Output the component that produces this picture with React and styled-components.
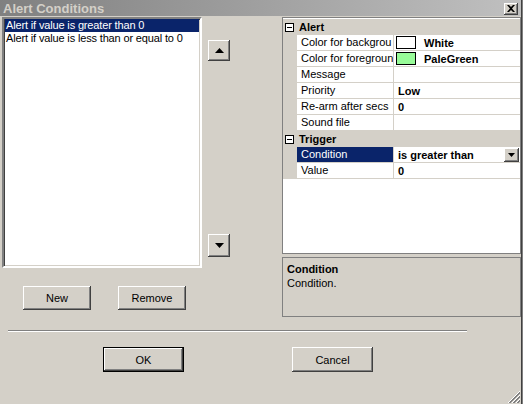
import React from "react";
import styled, { createGlobalStyle, css } from "styled-components";

const FACE = "#d4d0c8";
const NAVY = "#0a246a";

const Global = createGlobalStyle`
  html, body { margin: 0; padding: 0; background: ${FACE}; }
  body { font-family: "Liberation Sans", Arial, sans-serif; font-size: 11px; color: #000; }
  * { box-sizing: border-box; }
`;

const raised = css`
  background: ${FACE};
  box-shadow: inset -1px -1px #404040, inset 1px 1px #fff, inset -2px -2px #808080;
`;

const Window = styled.div`
  width: 523px;
  height: 404px;
  background: ${FACE};
  border-right: 1px solid #808080;
  box-shadow: inset -1px 0 #404040;
  position: relative;
  display: flex;
  flex-direction: column;
  overflow: hidden;
`;

const TitleBar = styled.div`
  height: 16px;
  margin-right: 1px;
  background: linear-gradient(to right, #808080, #c0c0c0);
  display: flex;
  align-items: center;
  justify-content: space-between;
  padding: 0 3px 0 3px;
`;

const Title = styled.span`
  font-weight: bold;
  font-size: 13px;
  color: ${FACE};
`;

const CloseButton = styled.div`
  ${raised};
  width: 14px;
  height: 12px;
  display: flex;
  align-items: center;
  justify-content: center;
  margin-top: 1px;
`;

const Body = styled.div`
  display: flex;
  padding: 1px 0 0 2px;
`;

const LeftCol = styled.div`
  width: 200px;
  display: flex;
  flex-direction: column;
`;

const ListBox = styled.div`
  height: 251px;
  background: #fff;
  border: 2px solid;
  border-color: #808080 #fff #fff #808080;
  box-shadow: inset 1px 1px #404040, inset -1px -1px ${FACE};
  padding: 0 1px 0 1px;
`;

const ListItem = styled.div`
  height: 13px;
  line-height: 13px;
  padding-left: 1px;
  white-space: nowrap;
  letter-spacing: -0.15px;
  background: ${(p) => (p.$selected ? NAVY : "transparent")};
  color: ${(p) => (p.$selected ? "#fff" : "#000")};
`;

const ButtonRow = styled.div`
  display: flex;
  gap: 27px;
  padding-left: 21px;
  margin-top: 18px;
`;

const Button = styled.button`
  ${raised};
  border: none;
  width: ${(p) => p.$w}px;
  height: ${(p) => p.$h}px;
  font-family: inherit;
  font-size: 11px;
  color: #000;
  padding: 0;
  display: flex;
  align-items: center;
  justify-content: center;
  ${(p) =>
    p.$default &&
    css`
      box-shadow: inset 0 0 0 1px #000, inset -2px -2px #404040, inset 2px 2px #fff,
        inset -3px -3px #808080;
    `}
`;

const MidCol = styled.div`
  width: 80px;
  display: flex;
  flex-direction: column;
  padding-left: 6px;
`;

const ArrowButton = styled(Button)`
  margin-top: ${(p) => p.$top}px;
`;

const RightCol = styled.div`
  width: 239px;
  display: flex;
  flex-direction: column;
  gap: 3px;
`;

const Grid = styled.div`
  height: 237px;
  border: 1px solid #808080;
  background: #fff;
  padding-top: 1px;
`;

const Row = styled.div`
  display: grid;
  grid-template-columns: 14px 96px 1px 1fr;
  height: 16px;
  border-bottom: 1px solid ${FACE};
`;

const Margin = styled.div`
  background: ${FACE};
`;

const CategoryRow = styled.div`
  display: flex;
  align-items: center;
  height: 16px;
  background: ${FACE};
`;

const ExpandBox = styled.div`
  width: 9px;
  height: 9px;
  border: 1px solid #000;
  background: #fff;
  margin: 0 3px 0 2px;
  display: flex;
  align-items: center;
  justify-content: center;
  &::after {
    content: "";
    width: 5px;
    height: 1px;
    background: #000;
  }
`;

const CategoryLabel = styled.span`
  font-weight: bold;
  margin-left: 2px;
`;

const Label = styled.div`
  padding-left: 4px;
  line-height: 15px;
  white-space: nowrap;
  overflow: hidden;
  background: ${(p) => (p.$selected ? NAVY : "#fff")};
  color: ${(p) => (p.$selected ? "#fff" : "#000")};
`;

const Divider = styled.div`
  background: ${FACE};
`;

const Value = styled.div`
  display: flex;
  align-items: center;
  padding-left: ${(p) => p.$pad ?? 4}px;
  font-weight: bold;
  white-space: nowrap;
  position: relative;
`;

const Swatch = styled.span`
  width: 20px;
  height: 13px;
  border: 1px solid #000;
  background: ${(p) => p.$color};
  margin-right: 8px;
`;

const DropButton = styled.div`
  ${raised};
  position: absolute;
  right: 1px;
  top: 1px;
  width: 15px;
  height: 14px;
  display: flex;
  align-items: center;
  justify-content: center;
`;

const Description = styled.div`
  height: 60px;
  border: 1px solid #808080;
  padding: 4px 4px;
  line-height: 14px;
`;

const DescTitle = styled.div`
  font-weight: bold;
`;

const Separator = styled.div`
  margin: 13px 0 0 8px;
  width: 459px;
  height: 2px;
  border-top: 1px solid #808080;
  border-bottom: 1px solid #fff;
`;

const DialogButtons = styled.div`
  display: flex;
  gap: 108px;
  padding-left: 103px;
  margin-top: 15px;
`;

const Grip = styled.div`
  position: absolute;
  right: 2px;
  bottom: 1px;
  display: flex;
`;

const Triangle = ({ down, w = 7, h = 4 }) => (
  <svg width={w} height={h} viewBox={`0 0 ${w} ${h}`}>
    <path d={down ? `M0 0H${w}L${w / 2} ${h}Z` : `M${w / 2} 0L${w} ${h}H0Z`} fill="#000" />
  </svg>
);

const CloseGlyph = () => (
  <svg width="8" height="7" viewBox="0 0 8 7">
    <path d="M0 0h2l2 2 2-2h2L5 3.5 8 7H6L4 5 2 7H0l3-3.5Z" fill="#000" />
  </svg>
);

const GripGlyph = () => (
  <svg width="12" height="12" viewBox="0 0 12 12">
    {[0, 4, 8].map((o) => (
      <g key={o}>
        <line x1={12} y1={o} x2={o} y2={12} stroke="#fff" strokeWidth="1" />
        <line x1={12} y1={o + 1} x2={o + 1} y2={12} stroke="#808080" strokeWidth="1" />
        <line x1={12} y1={o + 2} x2={o + 2} y2={12} stroke="#808080" strokeWidth="1" />
      </g>
    ))}
  </svg>
);

const conditions = [
  "Alert if value is greater than 0",
  "Alert if value is less than or equal to 0",
];

const alertProps = [
  { label: "Color for backgrou", value: "White", swatch: "#ffffff" },
  { label: "Color for foregroun", value: "PaleGreen", swatch: "#98fb98" },
  { label: "Message", value: "" },
  { label: "Priority", value: "Low" },
  { label: "Re-arm after secs", value: "0" },
  { label: "Sound file", value: "" },
];

function PropRow({ label, value, swatch, selected, dropdown }) {
  return (
    <Row>
      <Margin />
      <Label $selected={selected}>{label}</Label>
      <Divider />
      <Value $pad={swatch ? 2 : 4}>
        {swatch && <Swatch $color={swatch} />}
        {value}
        {dropdown && (
          <DropButton>
            <Triangle down />
          </DropButton>
        )}
      </Value>
    </Row>
  );
}

function Category({ name }) {
  return (
    <CategoryRow>
      <ExpandBox />
      <CategoryLabel>{name}</CategoryLabel>
    </CategoryRow>
  );
}

export default function App() {
  return (
    <>
      <Global />
      <Window>
        <TitleBar>
          <Title>Alert Conditions</Title>
          <CloseButton>
            <CloseGlyph />
          </CloseButton>
        </TitleBar>
        <Body>
          <LeftCol>
            <ListBox>
              {conditions.map((c, i) => (
                <ListItem key={c} $selected={i === 0}>
                  {c}
                </ListItem>
              ))}
            </ListBox>
            <ButtonRow>
              <Button $w={68} $h={24}>New</Button>
              <Button $w={68} $h={24}>Remove</Button>
            </ButtonRow>
          </LeftCol>
          <MidCol>
            <ArrowButton $w={22} $h={21} $top={23}>
              <Triangle w={9} h={5} />
            </ArrowButton>
            <ArrowButton $w={22} $h={23} $top={173}>
              <Triangle down w={9} h={5} />
            </ArrowButton>
          </MidCol>
          <RightCol>
            <Grid>
              <Category name="Alert" />
              {alertProps.map((p) => (
                <PropRow key={p.label} {...p} />
              ))}
              <Category name="Trigger" />
              <PropRow label="Condition" value="is greater than" selected dropdown />
              <PropRow label="Value" value="0" />
            </Grid>
            <Description>
              <DescTitle>Condition</DescTitle>
              <div>Condition.</div>
            </Description>
          </RightCol>
        </Body>
        <Separator />
        <DialogButtons>
          <Button $w={81} $h={25} $default>OK</Button>
          <Button $w={81} $h={25}>Cancel</Button>
        </DialogButtons>
        <Grip>
          <GripGlyph />
        </Grip>
      </Window>
    </>
  );
}
